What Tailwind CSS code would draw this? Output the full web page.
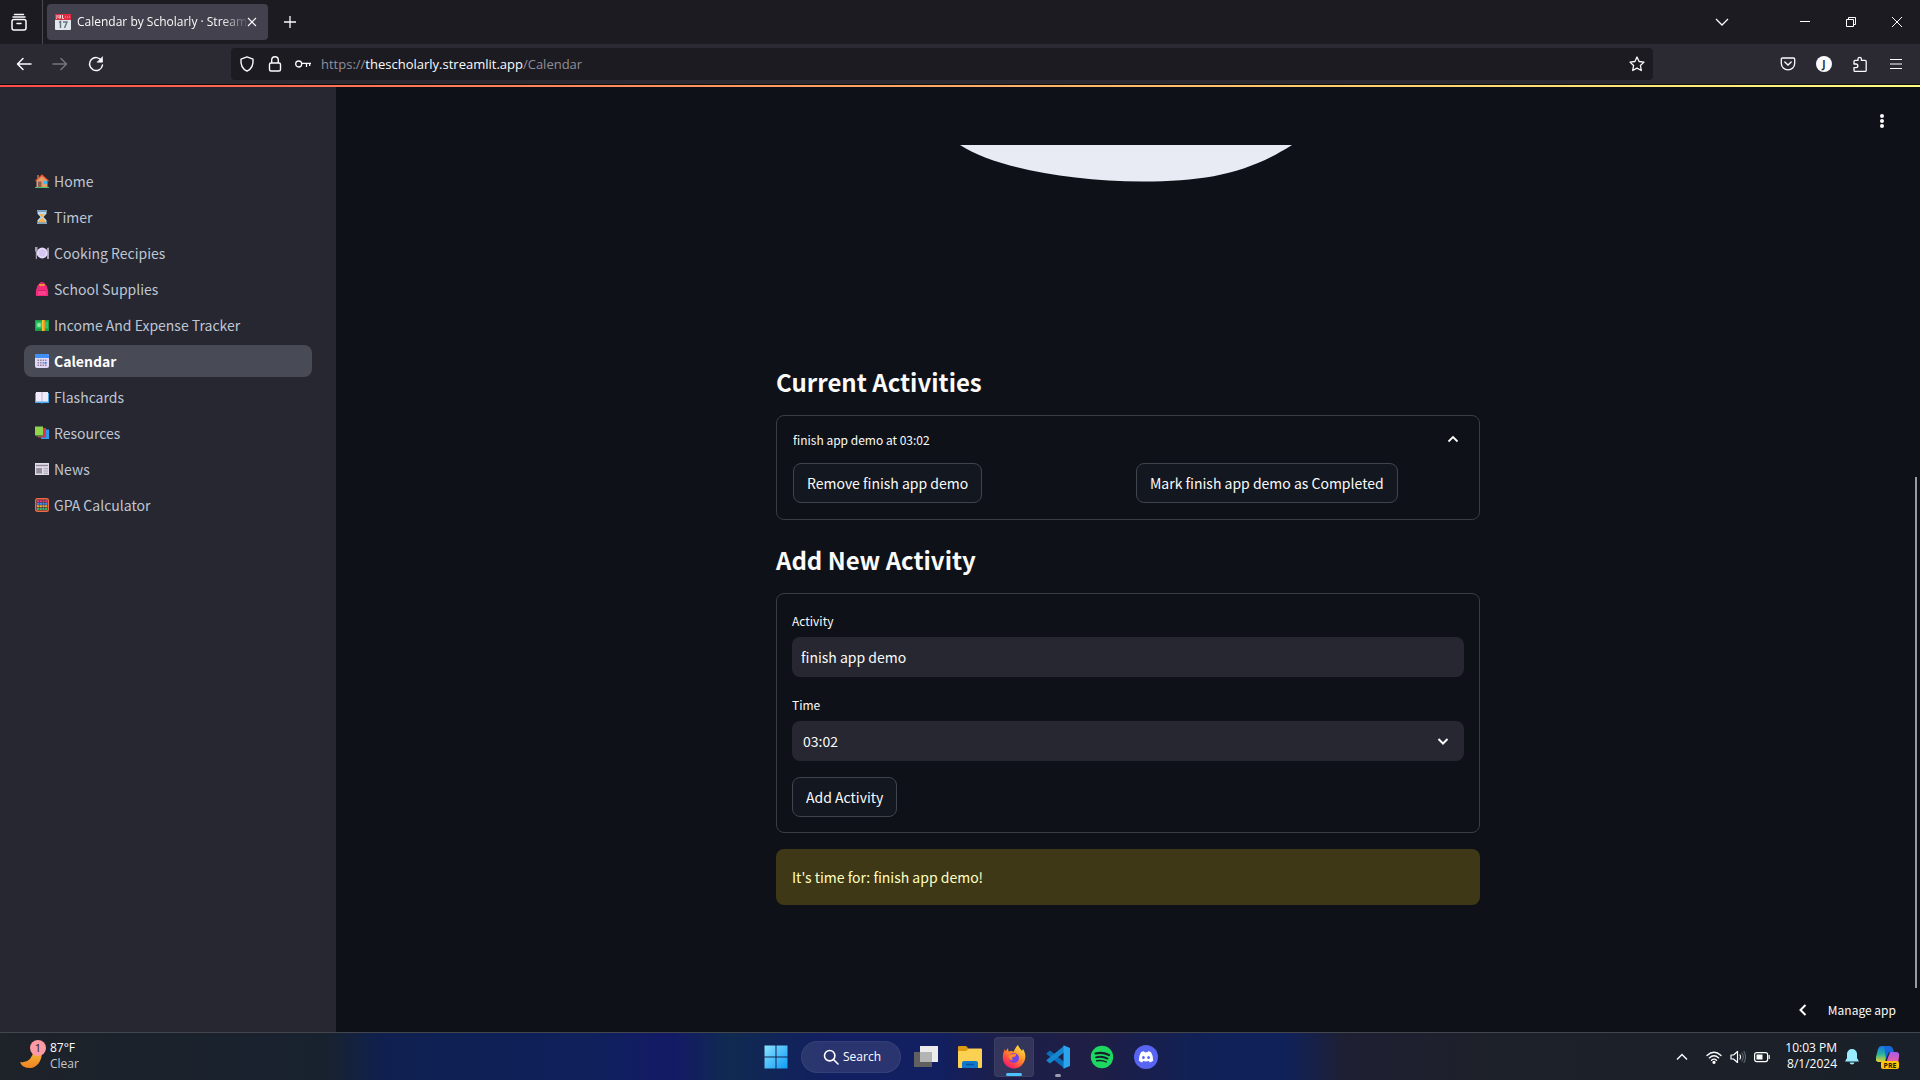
<!DOCTYPE html>
<html lang="en">
<head>
    <meta charset="UTF-8">
    <meta name="viewport" content="width=device-width, initial-scale=1.0">
    <title>Calendar by Scholarly · Streamlit</title>
    <script src="https://cdn.jsdelivr.net/npm/@tailwindcss/browser@4"></script>
</head>
<body class="flex flex-col h-screen overflow-hidden bg-[#0e1117] text-[#fafafa] font-['Noto_Sans_CJK_SC','Open_Sans',sans-serif]">

    <!-- Tab strip -->
    <div class="flex items-center h-11 shrink-0 bg-[#1c1b22] font-['Open_Sans',sans-serif]">
        <button aria-label="Firefox View" class="flex items-center justify-center w-[43px] h-full border-r border-[#4a4953] pr-1">
            <svg class="w-5 h-5" viewBox="0 0 20 20" fill="none" stroke="#fbfbfe" stroke-width="1.5" stroke-linecap="round"><path d="M5.500 2.500h9M4 5h12"/><rect x="3" y="7.500" width="14" height="10.500" rx="2"/><path d="M8 11.500h4"/></svg>
        </button>
        <div class="flex items-center ml-1 w-[221px] h-9 rounded bg-[#42414d] pl-2 pr-2">
            <svg class="w-4 h-4 shrink-0" viewBox="0 0 16 16"><rect width="16" height="16" rx="1" fill="#e1e8ed"/><path d="M0 0h16v6H0z" fill="#dd2e44"/><path d="M2 1v2.500q0 1-1 1M4 1v3h1.500V1M7.500 1v3.500H9" stroke="#fff" stroke-width=".8" fill="none"/><path d="M10 3h1M12 3h1M14 3h1" stroke="#f4abba"/><path d="M4 8.500l1.500-1V14M8 8h4l-2.500 6" stroke="#66757f" stroke-width="1.500" fill="none"/></svg>
            <span class="flex-1 ml-1.5 text-xs whitespace-nowrap overflow-hidden [mask-image:linear-gradient(to_right,#000_85%,transparent_102%)]">Calendar by Scholarly · Streamlit</span>
            <button aria-label="Close tab" class="-ml-0.5"><svg class="w-4 h-4" viewBox="0 0 16 16" stroke="#fbfbfe" stroke-width="1.1"><path d="M4 4l8 8M12 4l-8 8"/></svg></button>
        </div>
        <button aria-label="New tab" class="ml-3"><svg class="w-5 h-5" viewBox="0 0 20 20" stroke="#fbfbfe" stroke-width="1.300"><path d="M10 4v12M4 10h12"/></svg></button>
        <div class="flex items-center ml-auto mr-[15px]">
            <button aria-label="List tabs" class="mr-[67px]"><svg class="w-4 h-4" viewBox="0 0 16 16" fill="none" stroke="#fbfbfe" stroke-width="1.300"><path d="M2 5l6 6 6-6"/></svg></button>
            <button aria-label="Minimize" class="mr-[30px]"><svg class="w-4 h-4" viewBox="0 0 16 16" stroke="#fff"><path d="M3 7.500h10"/></svg></button>
            <button aria-label="Restore" class="mr-[30px]"><svg class="w-4 h-4" viewBox="0 0 16 16" fill="none" stroke="#fff"><path d="M3.500 5.500h7v7h-7zM5.500 5V3.500h7v7H11"/></svg></button>
            <button aria-label="Close window"><svg class="w-4 h-4" viewBox="0 0 16 16" stroke="#fff"><path d="M3 3l10 10M13 3L3 13"/></svg></button>
        </div>
    </div>

    <!-- Toolbar -->
    <div class="flex items-center h-[41px] shrink-0 bg-[#2b2a33] border-b border-[#0c0c0d] pl-4 pr-4 font-['Open_Sans',sans-serif]">
        <button aria-label="Back"><svg class="w-4 h-4" viewBox="0 0 16 16" fill="none" stroke="#fbfbfe" stroke-width="1.500" stroke-linecap="round" stroke-linejoin="round"><path d="M15 8H1.500M7 2.500L1.500 8 7 13.500"/></svg></button>
        <button aria-label="Forward" class="ml-5"><svg class="w-4 h-4" viewBox="0 0 16 16" fill="none" stroke="#76757e" stroke-width="1.500" stroke-linecap="round" stroke-linejoin="round"><path d="M1 8h13.500M9 2.500L14.500 8 9 13.500"/></svg></button>
        <button aria-label="Reload" class="ml-5"><svg class="w-4 h-4" viewBox="0 0 16 16" fill="none" stroke="#fbfbfe" stroke-width="1.500" stroke-linecap="round"><path d="M13.800 5A6.500 6.500 0 1 0 14.500 9"/><path d="M14.500 1v5.200H9.300z" fill="#fbfbfe" stroke-width=".6"/></svg></button>
        <div class="flex items-center flex-1 h-8 ml-[127px] mr-[127px] rounded bg-[#1c1b22] px-2">
            <svg class="w-4 h-4" viewBox="0 0 16 16" fill="none" stroke="#fbfbfe" stroke-width="1.400" stroke-linejoin="round"><path d="M8 .9l6 2.300c.5 5-1.500 9.800-6 12-4.500-2.200-6.500-7-6-12z"/></svg>
            <svg class="w-4 h-4 ml-3" viewBox="0 0 16 16" fill="none" stroke="#fbfbfe" stroke-width="1.400"><rect x="2.500" y="7" width="11" height="8" rx="1.500"/><path d="M4.700 7V4a3.300 3.300 0 0 1 6.600 0v3"/></svg>
            <svg class="w-4 h-4 ml-3" viewBox="0 0 16 16" fill="none" stroke="#fbfbfe" stroke-width="1.300"><circle cx="3.700" cy="8" r="3"/><path d="M6.700 7.300H16M11.500 7.300V11M14.700 7.300V10"/></svg>
            <div class="flex-1 ml-2.5 pt-0.5 text-[13px] text-[#8f8f98]">https://<span class="text-[#fbfbfe]">thescholarly.streamlit.app</span>/Calendar</div>
            <button aria-label="Bookmark this page"><svg class="w-4 h-4" viewBox="0 0 16 16" fill="none" stroke="#fbfbfe" stroke-width="1.300" stroke-linejoin="round"><path d="M8 1l2.100 4.500 4.900.6-3.600 3.400.9 5L8 12.100l-4.300 2.400.9-5L1 6.100l4.900-.6z"/></svg></button>
        </div>
        <div class="flex items-center gap-5">
            <button aria-label="Save to Pocket"><svg class="w-4 h-4" viewBox="0 0 16 16" fill="none" stroke="#fbfbfe" stroke-width="1.300" stroke-linecap="round"><path d="M2.500 2h11q1.200 0 1.200 1.200v4a6.700 6.700 0 0 1-13.400 0v-4Q1.300 2 2.500 2z"/><path d="M4.800 6L8 9l3.200-3"/></svg></button>
            <button aria-label="Account" class="w-4 h-4 rounded-full bg-[#fbfbfe] text-[#2b2a33] text-[10px] font-bold leading-4">J</button>
            <button aria-label="Extensions"><svg class="w-4 h-4" viewBox="0 0 16 16" fill="none" stroke="#fbfbfe" stroke-width="1.300" stroke-linejoin="round"><path d="M2 8V5.400q0-1 1-1h3V3a1.700 1.700 0 0 1 3.400 0v1.400h3.800q1 0 1 1v9q0 1-1 1H3q-1 0-1-1v-2.700h2A1.800 1.800 0 0 0 4 8z"/></svg></button>
            <button aria-label="Application menu"><svg class="w-4 h-4" viewBox="0 0 16 16" stroke="#fbfbfe" stroke-width="1.200"><path d="M2 3.500h12M2 8h12M2 12.500h12"/></svg></button>
        </div>
    </div>

    <!-- App -->
    <div class="relative flex flex-1 min-h-0">
        <div class="absolute inset-x-0 top-0 h-0.5 bg-linear-to-r from-[#ff4b4b] to-[#fffd80]"></div>

        <nav class="w-[336px] shrink-0 bg-[#262730] px-6 pt-20">
            <ul class="flex flex-col gap-1 text-sm text-[#bfc5d3] leading-8">
                <li><a href="#" class="flex items-center gap-[5px] h-8 pl-[11px] rounded-lg">
                    <svg class="w-3.5 h-3.5" viewBox="0 0 14 14"><path d="M2 1h2v4H2z" fill="#8d6748"/><path d="M1.500 6L7 1.500 12.500 6v7h-11z" fill="#e0a06c"/><path d="M0 6.800L7 .2l7 6.600-.8.8L7 2.200.8 7.600z" fill="#ee5333"/><path d="M3 7.500h3.500V13H3z" fill="#8d5b53"/><path d="M8.500 7H12v3H8.500z" fill="#43b5f0"/><path d="M0 13h14v1H0z" fill="#4cc36a"/></svg>
                    Home</a></li>
                <li><a href="#" class="flex items-center gap-[5px] h-8 pl-[11px] rounded-lg">
                    <svg class="w-3.5 h-3.5" viewBox="0 0 14 14"><path d="M2.500 1.500h9v2.300L8.500 7l3 3.200v2.300h-9v-2.300l3-3.200-3-3.200z" fill="#b8dcf5"/><path d="M4 4h6L7.500 7h-1zM7 7.500l3.800 4v1H3.200v-1z" fill="#f9b34c"/><path d="M2 0h10v1.700H2zM2 12.300h10V14H2z" fill="#83a5bd"/></svg>
                    Timer</a></li>
                <li><a href="#" class="flex items-center gap-[5px] h-8 pl-[11px] rounded-lg">
                    <svg class="w-3.5 h-3.5" viewBox="0 0 14 14"><path d="M0 1h2.500v4L2 6v7H.8V6L0 5zM12 13V2q2-1 2 0v11z" fill="#a49fae"/><circle cx="7.200" cy="7" r="5.400" fill="#e9dcfb"/><circle cx="7.200" cy="7" r="3.700" fill="#d5c7f2"/></svg>
                    Cooking Recipies</a></li>
                <li><a href="#" class="flex items-center gap-[5px] h-8 pl-[11px] rounded-lg">
                    <svg class="w-3.5 h-3.5" viewBox="0 0 14 14"><path d="M5 2V1q2-1.500 4 0v1" stroke="#e12a6b" fill="none"/><path d="M1.500 7Q2 1.200 7 1.200T12.500 7q.7.500.6 3v4H.9v-4q-.1-2.500.6-3z" fill="#f2297b"/><path d="M4 2h6l-1 2.500-2-1-2 1z" fill="#f39b30"/><path d="M3 8.500h8V13H3z" fill="#fb3f8d"/><path d="M3 8.500h8" stroke="#b91c5c" stroke-width=".7"/></svg>
                    School Supplies</a></li>
                <li><a href="#" class="flex items-center gap-[5px] h-8 pl-[11px] rounded-lg">
                    <svg class="w-3.5 h-3.5" viewBox="0 0 14 14"><path d="M0 2h14v11H0z" fill="#16a04a"/><path d="M1 3.500h12v7H1z" fill="#29c765"/><circle cx="4" cy="7" r="2" fill="#9be7a8"/><path d="M7 2h3v11H7z" fill="#f7c12f"/><path d="M8.500 2H10v11H8.500z" fill="#f0932b"/></svg>
                    Income And Expense Tracker</a></li>
                <li><a href="#" class="flex items-center gap-[5px] h-8 pl-[11px] rounded-lg bg-[#484a55] text-white font-bold">
                    <svg class="w-3.5 h-3.5" viewBox="0 0 14 14"><rect width="14" height="14" rx="2" fill="#e4d9f5"/><path d="M0 4V2q0-2 2-2h10q2 0 2 2v2z" fill="#3e8ff8"/><path d="M2.500 6.300h9M2.500 8.800h9M2.500 11.300h9" stroke="#8f84a3" stroke-width="1.600" stroke-dasharray="1.600 .9"/><path d="M9.500 8h2v1.800h-2z" fill="#2f8cf0"/></svg>
                    Calendar</a></li>
                <li><a href="#" class="flex items-center gap-[5px] h-8 pl-[11px] rounded-lg">
                    <svg class="w-3.5 h-3.5" viewBox="0 0 14 14"><path d="M0 3h14v10H8l-1 .7-1-.7H0z" fill="#4ba9ea"/><path d="M1 2h5.500L7 2.500 7.500 2H13v9.500H1z" fill="#f1eafa"/><path d="M7 2.500v9" stroke="#c5b5d9"/></svg>
                    Flashcards</a></li>
                <li><a href="#" class="flex items-center gap-[5px] h-8 pl-[11px] rounded-lg">
                    <svg class="w-3.5 h-3.5" viewBox="0 0 14 14"><path d="M9 3.500h5V13H6v-2z" fill="#2f9be8"/><path d="M5 2h6v9.500H3V10z" fill="#dc2f5d"/><path d="M0 .5h8V9H0z" fill="#8fd44c"/><path d="M0 9h8v1.500H1z" fill="#4c8a3c"/></svg>
                    Resources</a></li>
                <li><a href="#" class="flex items-center gap-[5px] h-8 pl-[11px] rounded-lg">
                    <svg class="w-3.5 h-3.5" viewBox="0 0 14 14"><path d="M0 1h14v12H0z" fill="#e2dcea"/><path d="M1 3.500h12" stroke="#8d8796" stroke-width="1.400"/><path d="M1.200 6H7v5.500H1.200z" fill="#948e9e"/><path d="M8.500 6.700H13M8.500 9H13M8.500 11.200H13" stroke="#a39dad"/></svg>
                    News</a></li>
                <li><a href="#" class="flex items-center gap-[5px] h-8 pl-[11px] rounded-lg">
                    <svg class="w-3.5 h-3.5" viewBox="0 0 14 14"><rect x=".7" y=".7" width="12.600" height="12.600" rx="1.500" fill="#3b2d3c" stroke="#ef6a43" stroke-width="1.400"/><g stroke-width="2" stroke-dasharray="2.200 .5"><path d="M2 3.200h10" stroke="#e5397b"/><path d="M2 5.800h10" stroke="#3d8ff0"/><path d="M2 8.300h10" stroke="#f3ae3a"/><path d="M2 10.900h10" stroke="#35b565"/></g></svg>
                    GPA Calculator</a></li>
            </ul>
        </nav>

        <main class="flex-1 min-w-0 pt-[60px] overflow-hidden">
            <div class="w-[704px] max-w-full mx-auto">
                <svg class="w-full h-[37px]" viewBox="0 0 704 37"><path d="M184 0H516C472 28 430 36.500 367 36.500C290 36.500 218 22 184 0z" fill="#e8ebf4"/></svg>

                <h3 class="mt-[180px] text-2xl leading-10 font-bold">Current Activities</h3>
                <details open class="mt-[13px] rounded-lg border border-[#3b3d43] px-4 pb-4">
                    <summary class="flex items-center justify-between h-[47px] text-xs list-none cursor-pointer">
                        finish app demo at 03:02
                        <svg class="w-5 h-5" viewBox="0 0 20 20" fill="none" stroke="#fafafa" stroke-width="1.800"><path d="M5.500 11.500L10 7l4.500 4.500"/></svg>
                    </summary>
                    <div class="grid grid-cols-2 gap-4">
                        <div><button class="h-10 px-[13px] rounded-lg border border-[#41444c] bg-[#131720] text-sm">Remove finish app demo</button></div>
                        <div><button class="h-10 px-[13px] rounded-lg border border-[#41444c] bg-[#131720] text-sm">Mark finish app demo as Completed</button></div>
                    </div>
                </details>

                <h3 class="mt-5 text-2xl leading-10 font-bold">Add New Activity</h3>
                <form class="mt-[13px] rounded-lg border border-[#3b3d43] p-[15px]">
                    <label for="activity" class="block mb-1 text-xs leading-6">Activity</label>
                    <input id="activity" type="text" value="finish app demo" class="block w-full h-10 px-[9px] rounded-lg bg-[#262730] text-sm">
                    <label for="time" class="block mt-4 mb-1 text-xs leading-6">Time</label>
                    <div class="relative">
                        <select id="time" class="block w-full h-10 px-[11px] rounded-lg bg-[#262730] text-sm appearance-none">
                            <option>03:02</option>
                        </select>
                        <svg class="absolute right-[11px] top-2.5 w-5 h-5 pointer-events-none" viewBox="0 0 20 20" fill="none" stroke="#fafafa" stroke-width="2"><path d="M5.500 8l4.500 4.500L14.500 8"/></svg>
                    </div>
                    <button type="button" class="mt-4 h-10 px-[13px] rounded-lg border border-[#41444c] bg-[#131720] text-sm">Add Activity</button>
                </form>

                <div role="alert" class="mt-4 flex items-center h-14 px-4 rounded-lg bg-[#3e3816] text-sm text-[#ffffc2]">It's time for: finish app demo!</div>
            </div>
        </main>

        <button aria-label="Main menu" class="absolute right-7 top-[26px]"><svg class="w-5 h-5" viewBox="0 0 20 20" fill="#fafafa"><circle cx="10" cy="5" r="2"/><circle cx="10" cy="10" r="2"/><circle cx="10" cy="15" r="2"/></svg></button>
        <div class="absolute right-[3px] top-[392px] bottom-11 w-0.5 bg-[#9a9b9e]"></div>
        <button class="absolute right-6 bottom-2.5 flex items-center gap-[18px] h-6 text-xs">
            <svg class="w-3.5 h-3.5" viewBox="0 0 14 14" fill="none" stroke="#fff" stroke-width="2"><path d="M9.500 2L4.500 7l5 5"/></svg>
            Manage app
        </button>
    </div>

    <!-- Taskbar -->
    <footer class="grid grid-cols-[1fr_auto_1fr] items-center h-12 shrink-0 border-t border-[#43464d] font-['Open_Sans',sans-serif] text-xs leading-4 text-white bg-[linear-gradient(to_right,#1e2229_0%,#18222f_17%,#0f2050_20%,#0f205c_31%,#131a66_35%,#102a50_38%,#121f60_43%,#121f60_49%,#1c1f4a_52%,#1f1e45_57%,#0f2157_63%,#10215a_67%,#1e1f33_70%,#1d2129_78%,#1a2029_100%)]">
        <button class="flex items-center gap-1 pl-[18px] pb-0.5 text-left">
            <svg class="w-7 h-8" viewBox="0 0 28 32"><defs><linearGradient id="moon" x2="0" y2="1"><stop stop-color="#f8c13a"/><stop offset="1" stop-color="#ee8222"/></linearGradient></defs><path d="M2 22q11 2 14-12l7-2c3 12-4 20-11 20q-8 0-10-6z" fill="url(#moon)"/><circle cx="20" cy="8" r="8" fill="#ff99a4"/><text x="20" y="12" text-anchor="middle" font-size="11" fill="#1a1a1a">1</text></svg>
            <span><span class="block">87°F</span><span class="block text-[#c5c8cd]">Clear</span></span>
        </button>

        <div class="flex items-center pl-0.5">
            <button aria-label="Start" class="flex justify-center w-10"><svg class="w-6 h-6" viewBox="0 0 24 24"><defs><linearGradient id="win" x2="1" y2="1"><stop stop-color="#8be3ff"/><stop offset="1" stop-color="#0c9bf5"/></linearGradient></defs><path d="M.5.500h11v11H.5zM12.500.500h11v11h-11zM.5 12.500h11v11H.5zM12.500 12.500h11v11h-11z" fill="url(#win)"/></svg></button>
            <button class="flex items-center ml-[5px] w-[100px] h-8 pl-[21px] gap-1 rounded-full border border-white/5 bg-white/10">
                <svg class="w-4 h-4" viewBox="0 0 16 16" fill="none" stroke="#fff" stroke-width="1.600" stroke-linecap="round"><circle cx="6.700" cy="6.700" r="5.200"/><path d="M10.500 10.500l4.500 4.500"/></svg>
                Search
            </button>
            <div class="flex items-center gap-1 ml-[5px]">
                <button aria-label="Task view" class="flex justify-center w-10"><svg class="w-6 h-6" viewBox="0 0 24 24"><path d="M6 1h18v16H6z" fill="#ececec"/><path d="M0 7h18v15H0z" fill="#606060"/><path d="M6 7h12v10H6z" fill="#b4b4b4"/></svg></button>
                <button aria-label="File Explorer" class="flex justify-center w-10"><svg class="w-6 h-6" viewBox="0 0 24 24"><path d="M0 2q0-1 1-1h7l3 3v3H0z" fill="#dd9a12"/><path d="M0 6h8l3-2.500h12q1 0 1 1V22q0 1-1 1H1q-1 0-1-1z" fill="#fcd050"/><path d="M4 23v-5q0-2 2-2h12q2 0 2 2v5z" fill="#1278cb"/><path d="M8 19.500h8" stroke="#0a559b" stroke-width="1.500"/></svg></button>
                <button aria-label="Firefox" class="relative flex justify-center items-center w-10 h-10 rounded border border-white/5 bg-white/10">
                    <svg class="w-6 h-6" viewBox="0 0 24 24"><defs><linearGradient id="fx" x1=".9" y1="0" x2=".2" y2="1"><stop stop-color="#fff44f"/><stop offset=".45" stop-color="#ff9026"/><stop offset=".8" stop-color="#ff3750"/><stop offset="1" stop-color="#e31587"/></linearGradient></defs><path d="M16 0c1 3 3 4 4 6l1-2c3 5 3 9 1 13-2 4-6 6.500-10 6.500C5 23.500.5 18 .8 12 .9 8 2 6 3 4l.5 2.500L6 3l.5 3.500c2-1 4-.5 5 .5 1-3 2.500-5 4.500-7z" fill="url(#fx)"/><circle cx="12" cy="13" r="5" fill="#7542e5"/><path d="M7 10l6-1.500c2 1 1 3-1.500 3.500-2 .5-2 2-.5 3-3 1-5-2-4-5z" fill="#ff8a2b"/></svg>
                    <span class="absolute bottom-0 w-4 h-[3px] rounded-full bg-[#4cc2ff]"></span>
                </button>
                <button aria-label="Visual Studio Code" class="relative flex justify-center items-center w-10 h-10">
                    <svg class="w-6 h-6" viewBox="0 0 24 24"><path d="M2 7l2-1.500L18.500 17v6.500L.8 9.200Q0 8.500.8 8z" fill="#0a6fb8"/><path d="M2 17l2 1.500L18.500 7V.5L.8 14.800q-.8.7 0 1.200z" fill="#1686cf"/><path d="M17.500.3L24 3v18l-6.500 2.700z" fill="#2ba4ee"/></svg>
                    <span class="absolute bottom-0 w-1.5 h-[3px] rounded-full bg-[#9a9cab]"></span>
                </button>
                <button aria-label="Spotify" class="flex justify-center w-10"><svg class="w-6 h-6" viewBox="0 0 24 24" fill="none" stroke="#15202b" stroke-linecap="round"><circle cx="12" cy="12" r="11.200" fill="#1ed760" stroke="none"/><path d="M5.500 8.500q7-2 13.500 1.500" stroke-width="2.200"/><path d="M6 12.300q6-1.600 11.500 1.300" stroke-width="1.900"/><path d="M6.700 15.800q5-1.200 9.500 1.100" stroke-width="1.500"/></svg></button>
                <button aria-label="Discord" class="flex justify-center w-10"><svg class="w-6 h-6" viewBox="0 0 24 24"><circle cx="12" cy="12" r="12" fill="#5865f2"/><path d="M7 7.300q1.500-.8 3-1l.5.900h3l.5-.900q1.500.2 3 1 2.500 4 2.200 8.500-1.700 1.300-3.400 1.700l-.9-1.400q-2.900.7-5.800 0l-.9 1.400q-1.700-.4-3.400-1.700Q4.500 11.300 7 7.300z" fill="#fff"/><ellipse cx="9.400" cy="12.500" rx="1.400" ry="1.600" fill="#5865f2"/><ellipse cx="14.600" cy="12.500" rx="1.400" ry="1.600" fill="#5865f2"/></svg></button>
            </div>
        </div>

        <div class="flex items-center justify-end pr-5">
            <button aria-label="Show hidden icons" class="mr-[18px]"><svg class="w-3 h-3" viewBox="0 0 12 12" fill="none" stroke="#fff" stroke-width="1.400"><path d="M1 8.500l5-5 5 5"/></svg></button>
            <button aria-label="Network, volume and battery" class="flex items-center gap-2 mr-[15px]">
                <svg class="w-4 h-4" viewBox="0 0 16 16" fill="none" stroke="#fff" stroke-width="1.300" stroke-linecap="round"><path d="M1 6.500q7-6.500 14 0M3.300 8.900q4.700-4.300 9.400 0M5.500 11.200q2.500-2.200 5 0"/><circle cx="8" cy="13.300" r="1" fill="#fff"/></svg>
                <svg class="w-4 h-4" viewBox="0 0 16 16" fill="none" stroke="#fff" stroke-width="1.200" stroke-linecap="round" stroke-linejoin="round"><path d="M1 6h2.500L7.500 2.500v11L3.500 10H1z"/><path d="M10 6q1.200 2 0 4"/><path d="M12 4q2.500 4 0 8M14 2.500q3 5.500 0 11" stroke="#5d626b"/></svg>
                <svg class="w-4 h-4" viewBox="0 0 16 16" fill="none" stroke="#fff" stroke-width="1.200"><rect x=".6" y="3.600" width="13" height="9" rx="2"/><path d="M2.500 5.500h6v5h-6z" fill="#fff" stroke="none"/><path d="M15.200 6.500v3" stroke-linecap="round"/></svg>
            </button>
            <button class="flex items-center gap-2 text-right">
                <span class="pb-0.5"><span class="block">10:03 PM</span><span class="block">8/1/2024</span></span>
                <svg class="w-3.5 h-4" viewBox="0 0 14 16" fill="#99ebff"><path d="M7 0a5 5 0 0 1 5 5v4l2 3.500H0L2 9V5a5 5 0 0 1 5-5zM4.500 13.500h5q-.5 2-2.500 2t-2.500-2z"/></svg>
            </button>
            <button aria-label="Copilot" class="ml-[17px]"><svg class="w-6 h-6" viewBox="0 0 24 24"><defs><linearGradient id="cop1" x2="0" y2="1"><stop stop-color="#1673e6"/><stop offset=".5" stop-color="#23b5a0"/><stop offset="1" stop-color="#e9d32e"/></linearGradient><linearGradient id="cop2" x2="0" y2="1"><stop stop-color="#a95be8"/><stop offset="1" stop-color="#f2619b"/></linearGradient></defs><path d="M5 1h8L9 17H2q-3-1-2-5L2 4q1-3 3-3z" fill="url(#cop1)"/><path d="M8 1h6q2 0 3 3l1 3h-5l-3 7z" fill="#1767d8"/><path d="M14 7h6q4 0 3 5l-1 6H10z" fill="url(#cop2)"/><rect x="5" y="16" width="18" height="8" rx="2" fill="#fdc60b"/><text x="14" y="23" text-anchor="middle" font-size="7" font-weight="700" fill="#221c00">PRE</text></svg></button>
        </div>
    </footer>
</body>
</html>
